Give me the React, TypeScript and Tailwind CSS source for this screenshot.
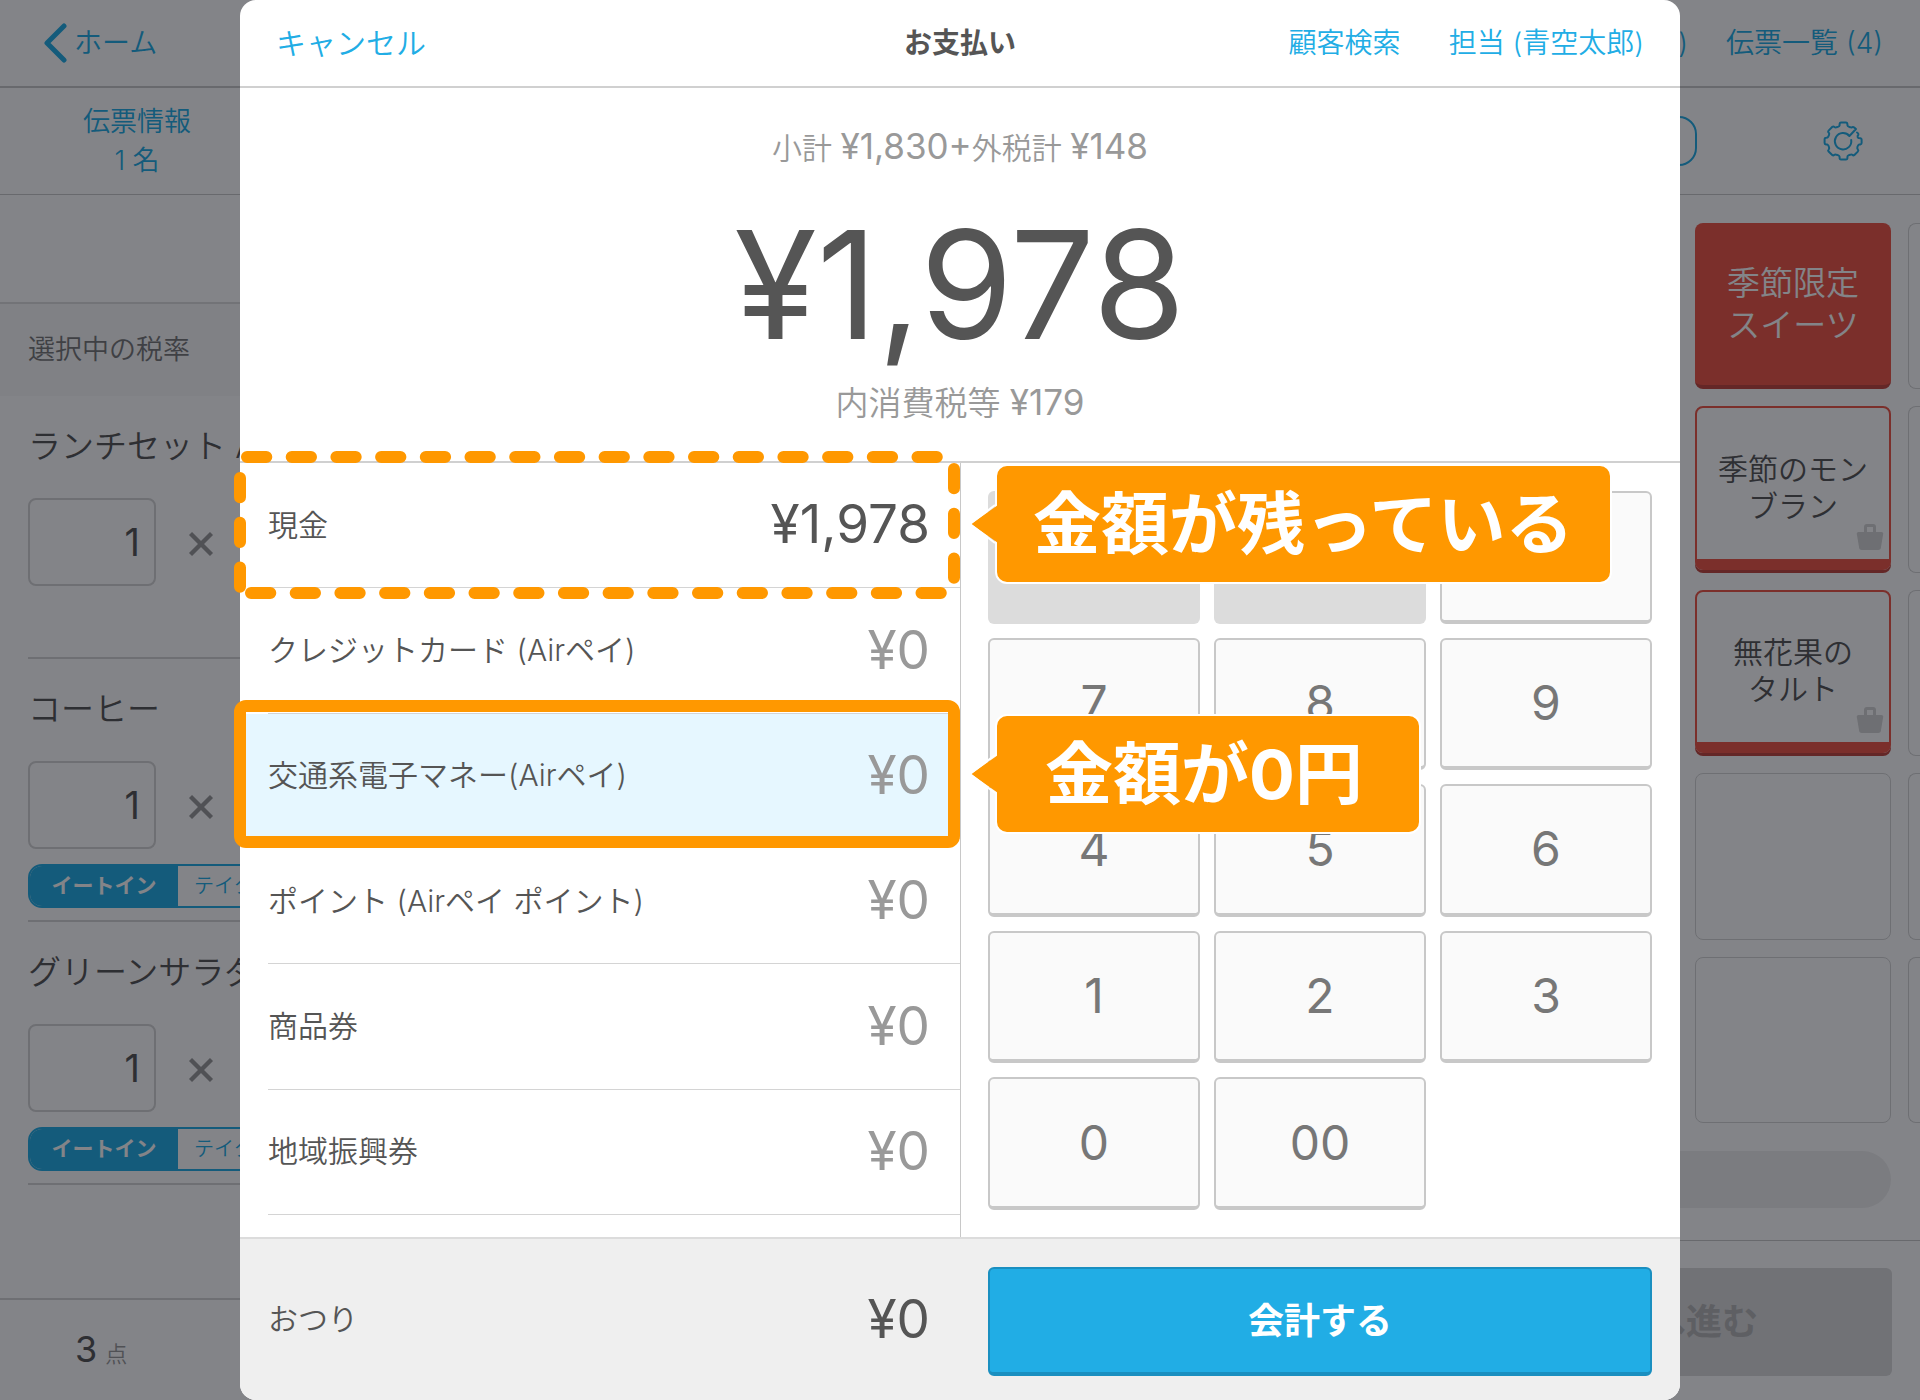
import React from 'react';
import { X } from 'lucide-react';

const orderItems = [
    { name: 'ランチセット A', qty: '1', dineOption: false },
    { name: 'コーヒー', qty: '1', dineOption: true },
    { name: 'グリーンサラダ', qty: '1', dineOption: true },
];

const payments = [
    { label: '現金', amount: '¥1,978', mark: 'dashed', note: '金額が残っている' },
    { label: 'クレジットカード (Airペイ)', amount: '¥0' },
    { label: '交通系電子マネー(Airペイ)', amount: '¥0', mark: 'solid', note: '金額が0円' },
    { label: 'ポイント (Airペイ ポイント)', amount: '¥0' },
    { label: '商品券', amount: '¥0' },
    { label: '地域振興券', amount: '¥0' },
];

const keys = ['7', '8', '9', '4', '5', '6', '1', '2', '3', '0', '00'];

const GearIcon = () => (
    <svg className="h-10 w-10" viewBox="0 0 40 40" fill="none" stroke="currentColor" strokeWidth="2" strokeLinecap="round" strokeLinejoin="round">
        <path d="M34 11.5 Q36.5 13 34.6 15 Q34.4 16.6 35.6 17 L37.4 17.2 Q38.6 17.4 38.6 18.6 V22 Q38.6 23.2 37.4 23.4 L36 23.6 Q35 24 34.4 26 Q34 27.4 34.8 28.4 Q35.8 29.6 34.8 30.6 L31.4 34 Q30.4 34.8 29.4 33.8 Q28.4 33 27 33.8 L25.4 34.4 Q24.4 34.8 24.4 36 V37.4 Q24.2 38.6 23 38.6 H18 Q16.8 38.6 16.6 37.4 V36 Q16.4 34.8 15.4 34.4 L13.6 33.8 Q12.2 33 11.2 34 Q10.2 34.8 9.2 34 L5.6 30.6 Q4.6 29.6 5.6 28.6 Q6.6 27.4 6 26 Q5.4 24 4.4 23.6 L3 23.4 Q1.6 23.2 1.6 22 V18 Q1.8 16.8 3 16.8 L4.4 16.6 Q5.4 16 6 14 Q6.6 12.6 5.8 11.8 Q4.6 10.6 5.6 9.6 L9.4 5.8 Q10.4 5 11.4 6 Q12.4 6.8 13.6 6.2 L15.4 5.6 Q16.4 5.2 16.6 4.2 V3 Q16.8 1.6 18 1.6 H23 Q24.2 1.6 24.4 2.8 V4.2 Q24.6 5.4 25.6 5.6 L27.2 6.2 Q28.4 6.8 29.2 6.2 Q30.2 5.6 31 6.4 L33 8 L26.4 15 A8.2 8.2 0 1 0 28.2 19" />
    </svg>
);

const BagIcon = () => (
    <svg className="absolute -bottom-1 right-[5px] h-7 w-7 text-[#d4d4d4]" viewBox="0 0 28 28" fill="currentColor">
        <path d="M8 9V4a3 3 0 0 1 3-3h6a3 3 0 0 1 3 3v5h5a2 2 0 0 1 2 3l-2 12a3 3 0 0 1-3 3H6a3 3 0 0 1-3-3L1 12a2 2 0 0 1 2-3Zm3 0h6V4h-6Z" />
    </svg>
);

const Callout = ({ text, className }: { text: string, className: string }) => (
    <div className="absolute left-full top-1/2 z-20 -mt-0.5 ml-2 flex -translate-y-1/2 items-center">
        <svg className="relative z-10 -mr-[3px] h-10 w-[30px]" viewBox="0 0 30 40">
            <path d="M30 1 L3 20 L30 39Z" fill="#ff9800" />
            <path d="M27 1 L2 20 L27 39" fill="none" stroke="#fff" strokeWidth="2" />
        </svg>
        <p className={`whitespace-nowrap rounded-xl border-2 border-white bg-[#ff9800] py-[10px] text-[68px] font-bold leading-[96px] text-white ${className}`}>
            {text}
        </p>
    </div>
);

const DashedFrame = () => (
    <svg className="pointer-events-none absolute -left-[6px] -top-3 z-10 h-[148px] w-[726px]" viewBox="0 0 726 148" fill="none" stroke="#ff9800" strokeWidth="12" strokeLinecap="round" strokeDasharray="19.3 25.4">
        <path d="M13 6H710" />
        <path d="M17 142H712" />
        <path d="M6 27V138" />
        <path d="M720 18V130" />
    </svg>
);

const OrderItem = ({ item }: { item: typeof orderItems[0] }) => (
    <li className="ml-7 h-[263px] border-b-2 border-[#d4d4d4] pt-[26px]">
        <p className="h-[76px] whitespace-nowrap text-[33px] leading-[48px] text-[#555]">{item.name}</p>
        <div className="flex items-center gap-6">
            <input
                aria-label={item.name}
                defaultValue={item.qty}
                className="h-[88px] w-32 rounded-lg border-2 border-[#d4d4d4] pr-[14px] text-right text-[38px] font-normal text-[#555]"
            />
            <X className="mt-1 h-[42px] w-[42px] text-[#999]" strokeWidth={2.5} strokeLinecap="butt" />
        </div>
        {item.dineOption && (
            <div className="mt-[15px] flex h-11 w-[240px] overflow-hidden rounded-[14px] border-2 border-[#21ade5] text-[21px]">
                <button className="w-[148px] shrink-0 bg-[#21ade5] font-bold text-white">イートイン</button>
                <button className="shrink-0 whitespace-nowrap bg-white px-4 text-[20px] text-[#21ade5]">テイク</button>
            </div>
        )}
    </li>
);

const ProductTile = ({ lines }: { lines: string[] }) => (
    <button className="relative mb-[3px] rounded-lg border-2 border-b-[11px] border-[#ee5444] pt-2 text-[30px] leading-[37px] text-[#555] shadow-[0_3px_0_#c0453c]">
        {lines[0]}
        <br />{lines[1]}
        <span className="absolute bottom-3 right-0 block"><BagIcon /></span>
    </button>
);

const EdgeTile = () => <div className="rounded-l-lg border border-r-0 border-[#d4d4d4]" />;

const RegisterScreen = () => (
    <div className="flex min-h-screen flex-col bg-white" aria-hidden="true">
        <header className="flex h-[88px] items-center justify-between border-b-2 border-[#c8c8c8] pl-[42px] pr-[37px] text-[28px] text-[#21ade5]">
            <button className="flex items-center gap-[6px]">
                <svg className="h-10 w-[26px]" viewBox="0 0 26 40" fill="none" stroke="currentColor" strokeWidth="5" strokeLinecap="round" strokeLinejoin="round">
                    <path d="M22 3 L5 20 L22 37" />
                </svg>
                ホーム
            </button>
            <div className="flex gap-[38px]">
                <span>)</span>
                <button>伝票一覧 (4)</button>
            </div>
        </header>
        <div className="flex h-[107px] items-center justify-between border-b border-[#c8c8c8] pr-[57px] text-[#21ade5]">
            <button className="w-[274px] text-[27px] leading-[39px]">
                伝票情報
                <br />1 名
            </button>
            <div className="flex items-center gap-[126px]">
                <div className="h-[50px] w-80 rounded-[18px] border-2 border-[#21ade5]" />
                <GearIcon />
            </div>
        </div>

        <div className="flex flex-1">
            <aside className="flex w-1/3 flex-col">
                <div className="h-[107px]" />
                <p className="flex h-[94px] items-center border-t-2 border-[#dcdcdc] bg-[#f8f8f8] pl-7 text-[27px] text-[#777]">選択中の税率</p>
                <ul>
                    {orderItems.map(item => (
                        <OrderItem key={item.name} item={item} />
                    ))}
                </ul>
                <p className="mt-auto flex h-[102px] items-baseline gap-2 border-t-2 border-[#d4d4d4] pl-[75px] pt-[22px] text-[#555]">
                    <span className="text-[36px] font-normal">3</span>
                    <span className="text-[22px] text-[#999]">点</span>
                </p>
            </aside>

            <main className="flex flex-1 flex-col">
                <div className="flex flex-1 justify-end overflow-hidden py-7">
                    <div className="grid grid-cols-[196px_12px] grid-rows-5 gap-[17px]">
                        <button className="rounded-lg border-b-4 border-[#c0453c] bg-[#ee5444] text-[33px] leading-[42px] text-white">
                            季節限定
                            <br />スイーツ
                        </button>
                        <EdgeTile />
                        <ProductTile lines={['季節のモン', 'ブラン']} />
                        <EdgeTile />
                        <ProductTile lines={['無花果の', 'タルト']} />
                        <EdgeTile />
                        <div className="rounded-lg border border-[#d4d4d4]" />
                        <EdgeTile />
                        <div className="rounded-lg border border-[#d4d4d4]" />
                        <EdgeTile />
                    </div>
                </div>
                <div className="mb-8 mr-[29px] h-[57px] rounded-full bg-[#efefef]" />
                <div className="h-40 border-t border-[#c8c8c8] pr-[28px] pt-[27px]">
                    <button className="flex h-[108px] w-full items-center justify-end rounded-md bg-[#dadada] pr-[134px] text-[36px] font-bold text-[#b4b4b4]">へ進む</button>
                </div>
            </main>
        </div>
    </div>
);

const PaymentRow = ({ payment }: { payment: typeof payments[0] }) => (
    <li className={`relative flex flex-1 pl-7 ${payment.mark === 'solid' ? 'bg-[#e6f7ff]' : ''}`}>
        <button className="flex flex-1 items-center justify-between border-b border-[#d4d4d4] pr-[30px] text-[#555]">
            <span className="text-[30px]">{payment.label}</span>
            <span className={`text-[53px] font-normal ${payment.amount === '¥0' ? 'text-[#999]' : ''}`}>{payment.amount}</span>
        </button>
        {payment.mark === 'dashed' && <DashedFrame />}
        {payment.mark === 'solid' && (
            <div className="pointer-events-none absolute -bottom-[9px] -left-[6px] -top-[14px] right-0 z-10 rounded-xl border-12 border-[#ff9800]" />
        )}
        {payment.note && <Callout text={payment.note} className={payment.mark === 'solid' ? 'pl-12 pr-14' : 'px-9'} />}
    </li>
);

const PaymentDialog = () => (
    <div role="dialog" aria-label="お支払い" className="mx-auto flex min-h-screen w-3/4 flex-col rounded-2xl bg-white">
        <header className="grid h-[88px] grid-cols-[1fr_auto_1fr] items-center border-b-2 border-[#d0d0d0] px-9 text-[28px] text-[#21ade5]">
            <button className="justify-self-start text-[30px]">キャンセル</button>
            <h1 className="font-bold text-[#555]">お支払い</h1>
            <div className="flex gap-12 justify-self-end">
                <button>顧客検索</button>
                <button>担当 (青空太郎)</button>
            </div>
        </header>

        <section className="flex h-[375px] flex-col items-center border-b-2 border-[#d0d0d0] pt-[34px] text-[#999]">
            <p className="text-[30px] leading-[48px]">
                小計 <span className="text-[35px] font-normal">¥1,830+</span>外税計 <span className="text-[35px] font-normal">¥148</span>
            </p>
            <p className="mt-5 text-[150px] font-normal leading-[186px] text-[#555]">¥1,978</p>
            <p className="text-[33px] leading-[48px]">
                内消費税等 <span className="text-[35px] font-normal">¥179</span>
            </p>
        </section>

        <div className="flex flex-1">
            <ul className="flex w-1/2 flex-col pb-[22px]">
                {payments.map(payment => (
                    <PaymentRow key={payment.label} payment={payment} />
                ))}
            </ul>
            <div className="grid w-1/2 grid-cols-3 grid-rows-5 gap-[14px] border-l border-[#c8c8c8] pb-[27px] pl-[27px] pr-7 pt-7">
                <button disabled aria-label="÷" className="rounded-md bg-[#dcdcdc]" />
                <button disabled aria-label="×" className="rounded-md bg-[#dcdcdc]" />
                <button aria-label="C" className="rounded-md border-2 border-b-4 border-[#c8c8c8] bg-[#fafafa]" />
                {keys.map(key => (
                    <button key={key} className="rounded-md border-2 border-b-4 border-[#c8c8c8] bg-[#fafafa] text-[48px] font-normal text-[#777]">
                        {key}
                    </button>
                ))}
            </div>
        </div>

        <footer className="flex h-[163px] rounded-b-2xl border-t-2 border-[#dcdcdc] bg-[#efefef]">
            <div className="flex w-1/2 items-center justify-between pl-7 pr-[30px] text-[#555]">
                <span className="text-[30px]">おつり</span>
                <span className="text-[53px] font-normal">¥0</span>
            </div>
            <div className="w-1/2 px-7 pb-6 pt-7">
                <button className="h-full w-full rounded-md border-2 border-b-4 border-[#1a8fc0] bg-[#21ade5] text-[36px] font-bold text-white">会計する</button>
            </div>
        </footer>
    </div>
);

export default function App() {
    return (
        <div className="relative overflow-hidden font-['Inter','Noto_Sans_CJK_JP',sans-serif] font-[350]">
            <RegisterScreen />
            <div className="absolute inset-0 bg-[#080a12]/50">
                <PaymentDialog />
            </div>
        </div>
    );
}
